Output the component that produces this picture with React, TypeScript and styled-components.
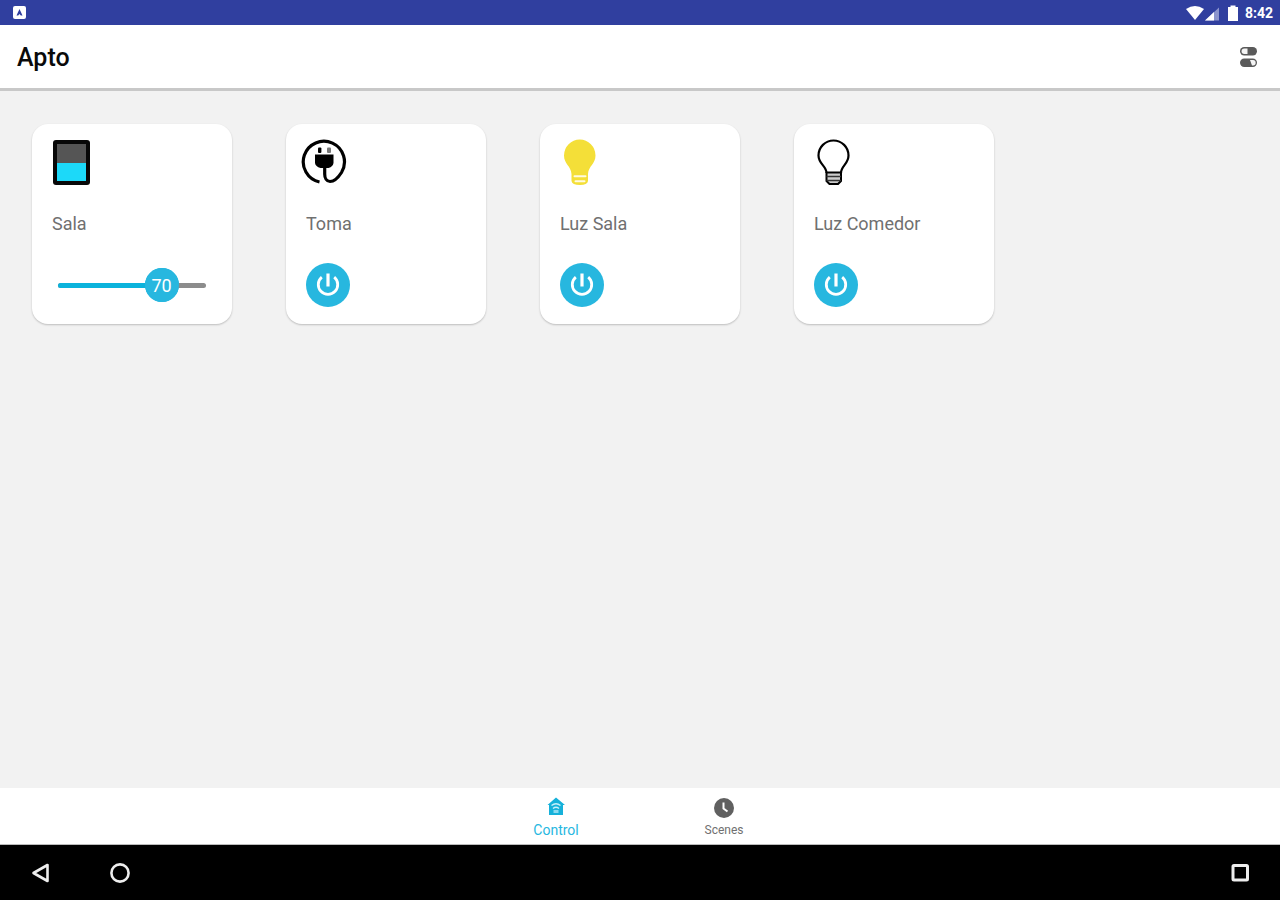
import React, { useState } from "react";
import styled, { createGlobalStyle } from "styled-components";

const colors = {
  status: "#303f9f",
  accent: "#27b7df",
  page: "#f2f2f2",
  muted: "#707070",
};

const GlobalStyle = createGlobalStyle`
  * { box-sizing: border-box; }
  body {
    margin: 0;
    background: ${colors.page};
    font-family: Roboto, "Liberation Sans", sans-serif;
  }
  button, input { font: inherit; margin: 0; }
`;

const Screen = styled.div`
  min-height: 100vh;
  display: flex;
  flex-direction: column;
`;

const StatusBar = styled.div`
  height: 25px;
  padding: 0 7px 0 13px;
  display: flex;
  align-items: center;
  justify-content: space-between;
  background: ${colors.status};
  color: #fff;
`;

const StatusIcons = styled.div`
  display: flex;
  align-items: center;
`;

const Clock = styled.time`
  margin-left: 5px;
  font-size: 14px;
  line-height: 24px;
  font-weight: 700;
`;

const Header = styled.header`
  height: 66px;
  padding: 0 20px 0 17px;
  display: flex;
  align-items: center;
  justify-content: space-between;
  background: #fff;
  border-bottom: 3px solid #c8c8c8;
`;

const Title = styled.h1`
  margin: 0;
  padding-top: 2px;
  font-size: 25px;
  line-height: 32px;
  font-weight: 500;
  color: #0a0a0a;
`;

const IconButton = styled.button`
  display: flex;
  padding: 0;
  border: 0;
  background: none;
  cursor: pointer;
`;

const Devices = styled.main`
  flex: 1;
  padding: 33px 32px;
  display: flex;
  flex-wrap: wrap;
  align-content: flex-start;
  gap: 54px;
`;

const Card = styled.section`
  width: 200px;
  padding: 14px 0 17px;
  display: flex;
  flex-direction: column;
  background: #fff;
  border-radius: 16px;
  box-shadow: 0 1px 2px rgba(0, 0, 0, 0.22);
`;

const DeviceIcon = styled.svg`
  width: 48px;
  height: 48px;
  margin-left: 15px;
`;

const DeviceName = styled.h2`
  margin: 26px 20px 27px;
  font-size: 18px;
  line-height: 24px;
  font-weight: 400;
  color: ${colors.muted};
`;

const PowerButton = styled.button`
  width: 44px;
  height: 44px;
  margin-left: 20px;
  padding: 0;
  display: flex;
  align-items: center;
  justify-content: center;
  border: 0;
  border-radius: 50%;
  background: ${colors.accent};
  cursor: pointer;
`;

const SliderRow = styled.div`
  position: relative;
  height: 44px;
  margin: 0 9px;
  display: flex;
  align-items: center;
`;

const Range = styled.input`
  appearance: none;
  width: 100%;
  height: 34px;
  background: none;
  cursor: pointer;

  &::-webkit-slider-thumb {
    appearance: none;
    width: 34px;
    height: 34px;
    border-radius: 50%;
    background: ${colors.accent};
  }
`;

const Track = styled.div`
  position: absolute;
  left: 17px;
  right: 17px;
  height: 5px;
  border-radius: 3px;
  background: #8c8c8c;
  pointer-events: none;
`;

const Fill = styled.div`
  height: 100%;
  border-radius: 3px;
  background: #0bb3dc;
`;

const Bubble = styled.output`
  position: absolute;
  width: 34px;
  height: 34px;
  border-radius: 50%;
  background: ${colors.accent};
  color: #fff;
  font-size: 18px;
  line-height: 36px;
  text-align: center;
  pointer-events: none;
`;

const Tabs = styled.nav`
  height: 57px;
  display: flex;
  justify-content: center;
  background: #fff;
  border-bottom: 1px solid #bbb;
`;

const Tab = styled.a<{ $active?: boolean }>`
  width: 168px;
  padding-top: 8px;
  display: flex;
  flex-direction: column;
  align-items: center;
  gap: 2px;
  color: ${(p) => (p.$active ? colors.accent : colors.muted)};
  font-size: ${(p) => (p.$active ? 14 : 12)}px;
  line-height: 20px;
  text-decoration: none;
`;

const SystemBar = styled.footer`
  height: 55px;
  padding: 0 28px;
  display: flex;
  align-items: center;
  gap: 56px;
  background: #000;

  & > :last-child { margin-left: auto; }
`;

const ShadeIcon = () => (
  <DeviceIcon viewBox="0 0 48 48" aria-hidden="true">
    <rect x="6" y="2" width="37" height="45" rx="3" fill="#080808" />
    <rect x="10" y="6" width="29" height="19" fill="#555" />
    <rect x="10" y="25" width="29" height="18" fill="#1cd9f9" />
  </DeviceIcon>
);

const PlugIcon = () => (
  <DeviceIcon viewBox="0 0 48 48" aria-hidden="true">
    <path
      d="M18.500 44A20.600 20.600 0 1 1 40.500 34.500C37 40 32.500 43.500 29 43.500C25.500 43.500 23.700 40 23.700 36V28"
      fill="none"
      stroke="#000"
      strokeWidth="3.200"
    />
    <path d="M14 16.500H32.500V25Q32 28.500 27.500 30H19.500Q14.500 28.500 14 25Z" fill="#000" />
    <rect x="17" y="9.500" width="3.400" height="5.500" rx="1" fill="#000" />
    <rect x="26" y="9.500" width="4" height="5.500" rx="1" fill="#777" />
  </DeviceIcon>
);

const BulbIcon = ({ lit }: { lit: boolean }) => (
  <DeviceIcon viewBox="0 0 48 48" aria-hidden="true">
    {lit ? (
      <>
        <path
          d="M9 17.500A15.700 16 0 0 1 40.500 17.500C40.500 26 33.500 28 33 36V43Q32.500 47 25 47Q17 47 16.500 43V36C16 28 9 26 9 17.500Z"
          fill="#f4df38"
        />
        <path d="M19.500 38.300H30.500M20.500 43.200H29.500" stroke="#fffbe0" strokeWidth="2" strokeLinecap="round" />
      </>
    ) : (
      <>
        <path
          d="M17.500 35C17.500 28 9.500 26 9.500 17.500A15 15 0 0 1 39.500 17.500C39.500 26 32 28 32 35"
          fill="none"
          stroke="#000"
          strokeWidth="2.200"
        />
        <path d="M17.500 34.500V43L20.500 46H29L32 43V34.500Z" fill="#ccc" stroke="#000" strokeWidth="2" strokeLinejoin="round" />
        <path d="M17.500 38.500H32M17.500 42.500H32" stroke="#333" strokeWidth="1.400" />
      </>
    )}
  </DeviceIcon>
);

const PowerGlyph = () => (
  <svg width="26" height="26" viewBox="0 0 26 26" fill="none" stroke="#fff" strokeWidth="2.800" aria-hidden="true">
    <path d="M13 1.500V14.500" strokeWidth="3.200" />
    <path d="M6.800 5.200A9.700 9.700 0 1 0 19.200 5.200" />
  </svg>
);

const DimmerCard = ({ name, initial }: { name: string; initial: number }) => {
  const [value, setValue] = useState(initial);
  return (
    <Card>
      <ShadeIcon />
      <DeviceName>{name}</DeviceName>
      <SliderRow>
        <Range
          type="range"
          min={0}
          max={100}
          value={value}
          aria-label={name}
          onChange={(e) => setValue(Number(e.target.value))}
        />
        <Track>
          <Fill style={{ width: `${value}%` }} />
        </Track>
        <Bubble style={{ left: `calc((100% - 34px) * ${value / 100})` }}>{value}</Bubble>
      </SliderRow>
    </Card>
  );
};

const SwitchCard = ({ name, icon }: { name: string; icon: React.ReactNode }) => (
  <Card>
    {icon}
    <DeviceName>{name}</DeviceName>
    <PowerButton type="button" aria-label={name}>
      <PowerGlyph />
    </PowerButton>
  </Card>
);

export default function App() {
  return (
    <Screen>
      <GlobalStyle />
      <StatusBar>
        <svg width="13" height="13" viewBox="0 0 13 13" aria-hidden="true">
          <rect width="13" height="13" rx="2" fill="#fff" />
          <path d="M6.500 3L9.500 9.500H7.800L6.500 8L5.200 9.500H3.500Z" fill={colors.status} />
        </svg>
        <StatusIcons>
          <svg width="55" height="18" viewBox="0 0 55 18" aria-hidden="true">
            <path d="M1 5Q10 -1 19 5L10 16Z" fill="#fff" />
            <path d="M20 16.500L34 3.500V16.500Z" fill="#8b94cc" />
            <path d="M20 16.500L29 8V16.500Z" fill="#fff" />
            <path d="M43 3H45.500V1.500H50.500V3H53V17H43Z" fill="#fff" />
          </svg>
          <Clock>8:42</Clock>
        </StatusIcons>
      </StatusBar>
      <Header>
        <Title>Apto</Title>
        <IconButton type="button" aria-label="Switches">
          <svg width="22" height="24" viewBox="0 0 22 24" aria-hidden="true">
            <rect x="2" y="2" width="17" height="8.500" rx="4.200" fill="#5a5a5a" />
            <path d="M9.500 3.600H6.300A2.700 2.700 0 0 0 6.300 9H9.500Z" fill="#f4f4f4" />
            <rect x="2" y="13.500" width="17" height="8.500" rx="4.200" fill="#5a5a5a" />
            <path d="M12 15.100H15A2.700 2.700 0 0 1 15 20.500H14Z" fill="#f4f4f4" />
          </svg>
        </IconButton>
      </Header>
      <Devices>
        <DimmerCard name="Sala" initial={70} />
        <SwitchCard name="Toma" icon={<PlugIcon />} />
        <SwitchCard name="Luz Sala" icon={<BulbIcon lit />} />
        <SwitchCard name="Luz Comedor" icon={<BulbIcon lit={false} />} />
      </Devices>
      <Tabs>
        <Tab href="#control" $active>
          <svg width="22" height="22" viewBox="0 0 22 22" aria-hidden="true">
            <path d="M11 1.500L20 9H18V19H4V9H2.500Z" fill="#16b1da" />
            <path d="M6.500 9.500Q11 6 15.500 9.500M8 12.500Q11 10 14 12.500" fill="none" stroke="#c9f0fa" strokeWidth="1.400" />
            <path d="M8.500 14H13.500V17H8.500Z" fill="#8bdaf0" />
          </svg>
          Control
        </Tab>
        <Tab href="#scenes">
          <svg width="22" height="22" viewBox="0 0 22 22" aria-hidden="true">
            <circle cx="11" cy="12" r="10" fill="#606060" />
            <path d="M10.500 6.500V12.500L14.500 15.500" fill="none" stroke="#fff" strokeWidth="2" />
          </svg>
          Scenes
        </Tab>
      </Tabs>
      <SystemBar>
        <IconButton type="button" aria-label="Back">
          <svg width="24" height="24" viewBox="0 0 24 24" aria-hidden="true">
            <path d="M5.500 12L19.500 4V20Z" fill="none" stroke="#eee" strokeWidth="2.600" strokeLinejoin="round" />
          </svg>
        </IconButton>
        <IconButton type="button" aria-label="Home">
          <svg width="24" height="24" viewBox="0 0 24 24" aria-hidden="true">
            <circle cx="12" cy="12" r="8.600" fill="none" stroke="#eee" strokeWidth="2.600" />
          </svg>
        </IconButton>
        <IconButton type="button" aria-label="Recent apps">
          <svg width="24" height="24" viewBox="0 0 24 24" aria-hidden="true">
            <rect x="5" y="4.500" width="14.500" height="14.500" rx="1" fill="none" stroke="#eee" strokeWidth="3" />
          </svg>
        </IconButton>
      </SystemBar>
    </Screen>
  );
}
